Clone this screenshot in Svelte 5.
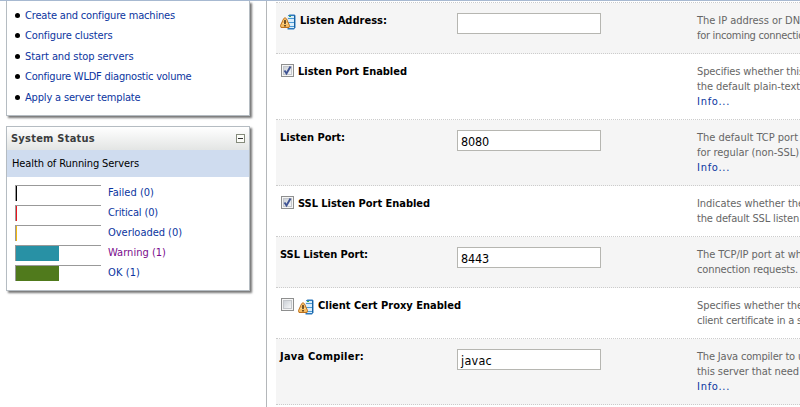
<script>
  // Sets the tracking of a label so that it spans the given width in pixels.
  function fit(node, width) {
    node.style.letterSpacing = '0px';
    const natural = node.getBoundingClientRect().width;
    const count = node.textContent.length;
    node.style.letterSpacing = `${(width - natural) / count}px`;
  }

  const tasks = [
    ['Create and configure machines', 150],
    ['Configure clusters', 87.5],
    ['Start and stop servers', 108.5],
    ['Configure WLDF diagnostic volume', 166.5],
    ['Apply a server template', 115.5]
  ];

  const health = [
    { label: 'Failed (0)', w: 46, edge: '#000', fill: 0 },
    { label: 'Critical (0)', w: 50, edge: '#e8141c', fill: 0 },
    { label: 'Overloaded (0)', w: 74, edge: '#f2b710', fill: 0 },
    { label: 'Warning (1)', w: 58, edge: '#2891a5', fill: 43, visited: true },
    { label: 'OK (1)', w: 32, edge: '#507a1c', fill: 43 }
  ];

  const rows = [
    { label: 'Listen Address:', w: 87, restart: true, value: '', help: [['The IP address or DN', 103], ['for incoming connectio', 107]] },
    { label: 'Listen Port Enabled', w: 109, check: true, on: true, help: [['Specifies whether this', 107], ['the default plain-text', 103]], info: true },
    { label: 'Listen Port:', w: 65, value: '8080', vw: 28, help: [['The default TCP port', 101], ['for regular (non-SSL)', 102]], info: true },
    { label: 'SSL Listen Port Enabled', w: 132, check: true, on: true, help: [['Indicates whether the', 107], ['the default SSL listen', 102]] },
    { label: 'SSL Listen Port:', w: 88, value: '8443', vw: 28, help: [['The TCP/IP port at wh', 105], ['connection requests.', 101]] },
    { label: 'Client Cert Proxy Enabled', w: 143, check: true, on: false, restart: true, help: [['Specifies whether the', 106], ['client certificate in a s', 105]] },
    { label: 'Java Compiler:', w: 84, value: 'javac', vw: 31, help: [['The Java compiler to u', 107], ['this server that need', 102]], info: true }
  ];
</script>

{#snippet restartIcon()}
  <svg class="restart" width="16" height="16" viewBox="0 0 16 16">
    <path d="M8 1.5 9.5.5h5l1 1v12l-1.5 2H7.500z" fill="#2b78bd" />
    <path d="M8 2h6v12H8z" fill="#d9edfb" />
    <path d="M8 4.500h6M8 8.500h6M8 12.500h6" stroke="#4b9ad6" />
    <path d="M9 2.500h2" stroke="#42ae45" />
    <path d="M14.500 1.500v12" stroke="#17609f" />
    <path d="M5 3.500 6.500 5 9.500 11.500 9 13.500H1L.5 11.500 3.500 5z" fill="#f6bd63" stroke="#bd711d" />
    <path d="M3.500 6.500h3M2.500 9.500h5" stroke="#ffe09a" />
    <path d="M5 6v4M5 11v1.500" stroke="#37200b" stroke-width="1.400" />
  </svg>
{/snippet}

<div class="page">
  <aside>
    <section class="panel tasks">
      <ul>
        {#each tasks as [text, w]}
          <li><i></i><a href="#top"><span use:fit={w}>{text}</span></a></li>
        {/each}
      </ul>
    </section>
    <section class="panel status">
      <header>
        <b><span use:fit={84}>System Status</span></b>
        <svg width="9" height="9" viewBox="0 0 9 9">
          <rect x=".5" y=".5" width="8" height="8" fill="#fbfcf8" stroke="#858b7c" />
          <path d="M2 4.500h5" stroke="#333" />
        </svg>
      </header>
      <div class="band"><span use:fit={127}>Health of Running Servers</span></div>
      <div class="bars">
        {#each health as h}
          <div class="meter-row">
            <div class="meter">
              <div class="fill" class:empty={!h.fill} style:width="{h.fill || 1}px" style:background={h.edge}></div>
            </div>
            <a href="#top" class:visited={h.visited}><span use:fit={h.w}>{h.label}</span></a>
          </div>
        {/each}
      </div>
    </section>
  </aside>
  <main>
    {#each rows as r}
      <div class="row">
        <div class="label">
          {#if r.check}
            <svg class="check" width="13" height="13" viewBox="0 0 13 13">
              <defs>
                <linearGradient id="box" x1="0" y1="0" x2="1" y2="1">
                  <stop offset="0" stop-color="#c9ced4" />
                  <stop offset="1" stop-color="#f8f9fa" />
                </linearGradient>
              </defs>
              <rect x=".5" y=".5" width="12" height="12" fill="#f5f5f5" stroke="#8e8f8f" />
              <rect x="2.500" y="2.500" width="8" height="8" fill="url(#box)" stroke="#c3c6ca" />
              {#if r.on}
                <path d="M3.500 6.500 5.500 9.500 9.500 2.500" fill="none" stroke="#3f5393" stroke-width="1.900" />
              {/if}
            </svg>
          {/if}
          {#if r.restart}{@render restartIcon()}{/if}
          <b><span use:fit={r.w}>{r.label}</span></b>
        </div>
        <div class="field">
          {#if !r.check}
            <div class="input">{#if r.value}<span use:fit={r.vw}>{r.value}</span>{/if}</div>
          {/if}
        </div>
        <div class="help">
          {#each r.help as [text, w]}
            <div><span use:fit={w}>{text}</span></div>
          {/each}
          {#if r.info}<a href="#top"><span use:fit={33}>Info...</span></a>{/if}
        </div>
      </div>
    {/each}
  </main>
</div>

<style>
  :global(body) { background: #fff; overflow: hidden; }
  .page {
    box-sizing: border-box;
    width: 800px;
    height: 407px;
    overflow: hidden;
    display: flex;
    border-top: 1px solid #a7b9d1;
    font: 11px/15px Tahoma, "DejaVu Sans Condensed", "DejaVu Sans", sans-serif;
    color: #000;
  }
  span { display: inline-block; white-space: pre; }
  b { font-family: Tahoma, "DejaVu Sans Condensed", sans-serif; }
  a { color: #0b35a0; text-decoration: none; }
  a.visited { color: #7a0c8c; }
  aside {
    box-sizing: border-box;
    width: 267px;
    padding-left: 6px;
    border-right: 1px solid #b4b7ba;
    flex: none;
  }
  .panel {
    box-sizing: border-box;
    width: 244px;
    border: 1px solid #b5bcc2;
    box-shadow: 2px 2px 2px #777;
  }
  .tasks { height: 115px; border-top: 0; clip-path: inset(0 -6px -6px 0); }
  ul { list-style: none; margin: 0; padding: 4px 0 0 8px; }
  li { display: flex; align-items: center; height: 20.5px; }
  li i { width: 5px; height: 5px; border-radius: 50%; background: #000; margin-right: 5px; }
  .status { height: 165px; margin-top: 10px; }
  header {
    box-sizing: border-box;
    height: 23px;
    padding: 0 4px;
    display: flex;
    align-items: center;
    justify-content: space-between;
    background: linear-gradient(#fff, #e3e5e4);
    color: #3b3d3e;
  }
  .band { box-sizing: border-box; height: 27px; padding: 6px 0 0 5px; background: #cfdcef; }
  .bars { padding: 8px 0 0 8px; }
  .meter-row { display: flex; height: 20px; }
  .meter { box-sizing: border-box; width: 86px; height: 16px; border-top: 1px solid #999; border-left: 1px solid #999; margin-right: 7px; }
  .fill { height: 15px; }
  .fill.empty { margin-left: 0; }
  main { flex: 1; margin: 1px 0 0 9px; border-top: 1px dotted #ccc; overflow: hidden; }
  .row { display: flex; padding: 10px 0 10px 4px; border-bottom: 1px dotted #ccc; }
  .row:nth-child(odd) { background: #f5f5f5; }
  .label { display: flex; align-items: flex-start; width: 177px; flex: none; }
  .check { margin: 0 4px 0 1px; flex: none; }
  .restart { margin: 1px 4px 0 0; flex: none; }
  .field { width: 240px; flex: none; }
  .input {
    box-sizing: border-box;
    width: 144px;
    height: 21px;
    margin-bottom: -6px;
    padding: 2px 0 0 3px;
    border: 1px solid #b6b6b1;
    background: #fff;
    font-size: 12.5px;
    line-height: 18px;
  }
  .help { width: 130px; flex: none; color: #666; }
  .help div, .help a { display: block; height: 15px; }
</style>
